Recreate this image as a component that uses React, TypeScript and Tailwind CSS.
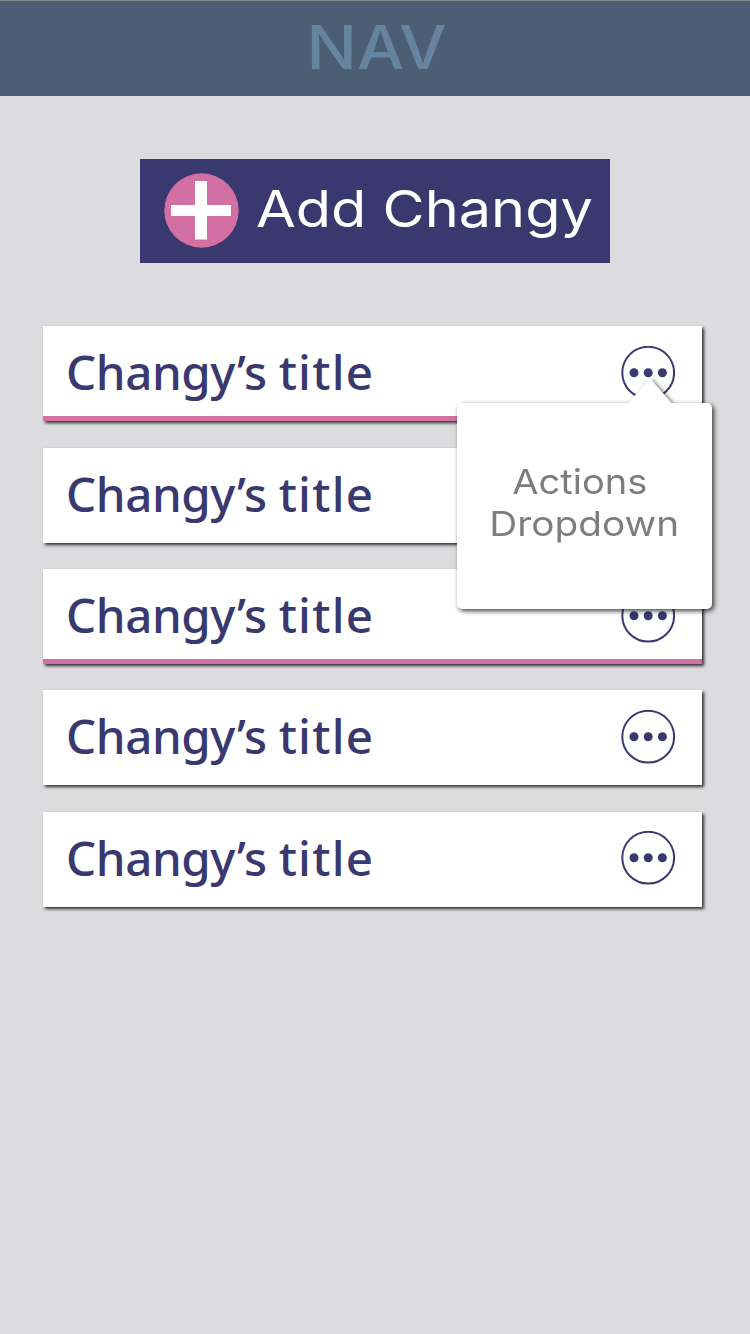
const rows = [
  { title: 'Changy’s title', marked: true },
  { title: 'Changy’s title', marked: false },
  { title: 'Changy’s title', marked: true },
  { title: 'Changy’s title', marked: false },
  { title: 'Changy’s title', marked: false },
];

function MoreIcon() {
  return (
    <svg width="54" height="54" viewBox="0 0 54 54" className="block text-[#393970]">
      <circle cx="27.2" cy="26.7" r="25.9" fill="none" stroke="currentColor" strokeWidth="2" />
      <circle cx="13" cy="26.7" r="4.5" fill="currentColor" />
      <circle cx="27.2" cy="26.7" r="4.5" fill="currentColor" />
      <circle cx="41.4" cy="26.7" r="4.5" fill="currentColor" />
    </svg>
  );
}

function AddIcon() {
  return (
    <svg width="75" height="75" viewBox="0 0 75 75" className="mb-[1px] block shrink-0">
      <circle cx="37.5" cy="37.5" r="37.2" fill="#d26fa3" />
      <path d="M7 32h60v11H7zM31 8h12v58.5H31z" fill="#fff" />
    </svg>
  );
}

function RowTitle({ text }: { text: string }) {
  const [name, rest] = text.split(' ');
  return (
    <span className="block whitespace-nowrap font-['Noto_Sans',sans-serif] text-[47.5px] font-medium leading-[92px] text-[#393970]">
      <span className="tracking-[-0.4px]">{name} </span>
      <span className="tracking-[1.3px]">{rest}</span>
    </span>
  );
}

function ActionsDropdown() {
  return (
    <div className="absolute left-[414px] top-[77.3px] z-10 h-[206px] w-[255px] drop-shadow-[2px_2px_2.5px_rgba(0,0,0,0.75)]">
      <svg width="44" height="26" viewBox="0 0 44 26" className="absolute -top-[25px] left-[171px]">
        <path d="M0 25.5L22 0l22 25.5z" fill="#fff" />
      </svg>
      <div className="flex h-full flex-col items-center rounded-[5px] bg-white pt-[57.5px] font-['Inter',sans-serif] text-[34px] leading-[42px] text-[#7d7d7d]">
        <span className="block origin-center -translate-x-[4.5px] scale-x-[1.12] whitespace-nowrap">Actions</span>
        <span className="block origin-center scale-x-[1.14] whitespace-nowrap">Dropdown</span>
      </div>
    </div>
  );
}

export default function App() {
  return (
    <div className="min-h-[1334px] w-[750px] bg-[#dcdcde]">
      <header className="flex h-24 justify-center border-t border-[#858b92] bg-[#4b5e74] font-['Inter',sans-serif] text-[60px] leading-[92px] text-[#66849f]">
        <span className="block translate-x-[1.5px] scale-x-[1.11] font-[450]">NAV</span>
      </header>
      <main className="px-[43px] pt-[63px]">
        <button className="ml-[97px] flex h-[104px] w-[470px] items-center bg-[#393970] pl-[24px] text-left text-white">
          <AddIcon />
          <span className="mb-[5px] ml-[17px] block origin-left scale-x-[1.13] whitespace-nowrap font-['Inter',sans-serif] text-[51px] font-[440] leading-[98px]">
            Add Changy
          </span>
        </button>
        <ul className="relative mt-[63.2px] flex w-[659px] flex-col gap-[26.4px]">
          {rows.map((row, i) => (
            <li
              key={i}
              className={`flex h-[95px] items-start justify-between bg-white pl-[23px] pr-[27px] shadow-[2px_2px_3px_rgba(0,0,0,0.8)] ${
                row.marked ? 'border-b-[5px] border-[#d26fa3]' : ''
              }`}
            >
              <RowTitle text={row.title} />
              <button aria-label="Actions" className="mt-[19.6px]">
                <MoreIcon />
              </button>
            </li>
          ))}
          <ActionsDropdown />
        </ul>
      </main>
    </div>
  );
}
